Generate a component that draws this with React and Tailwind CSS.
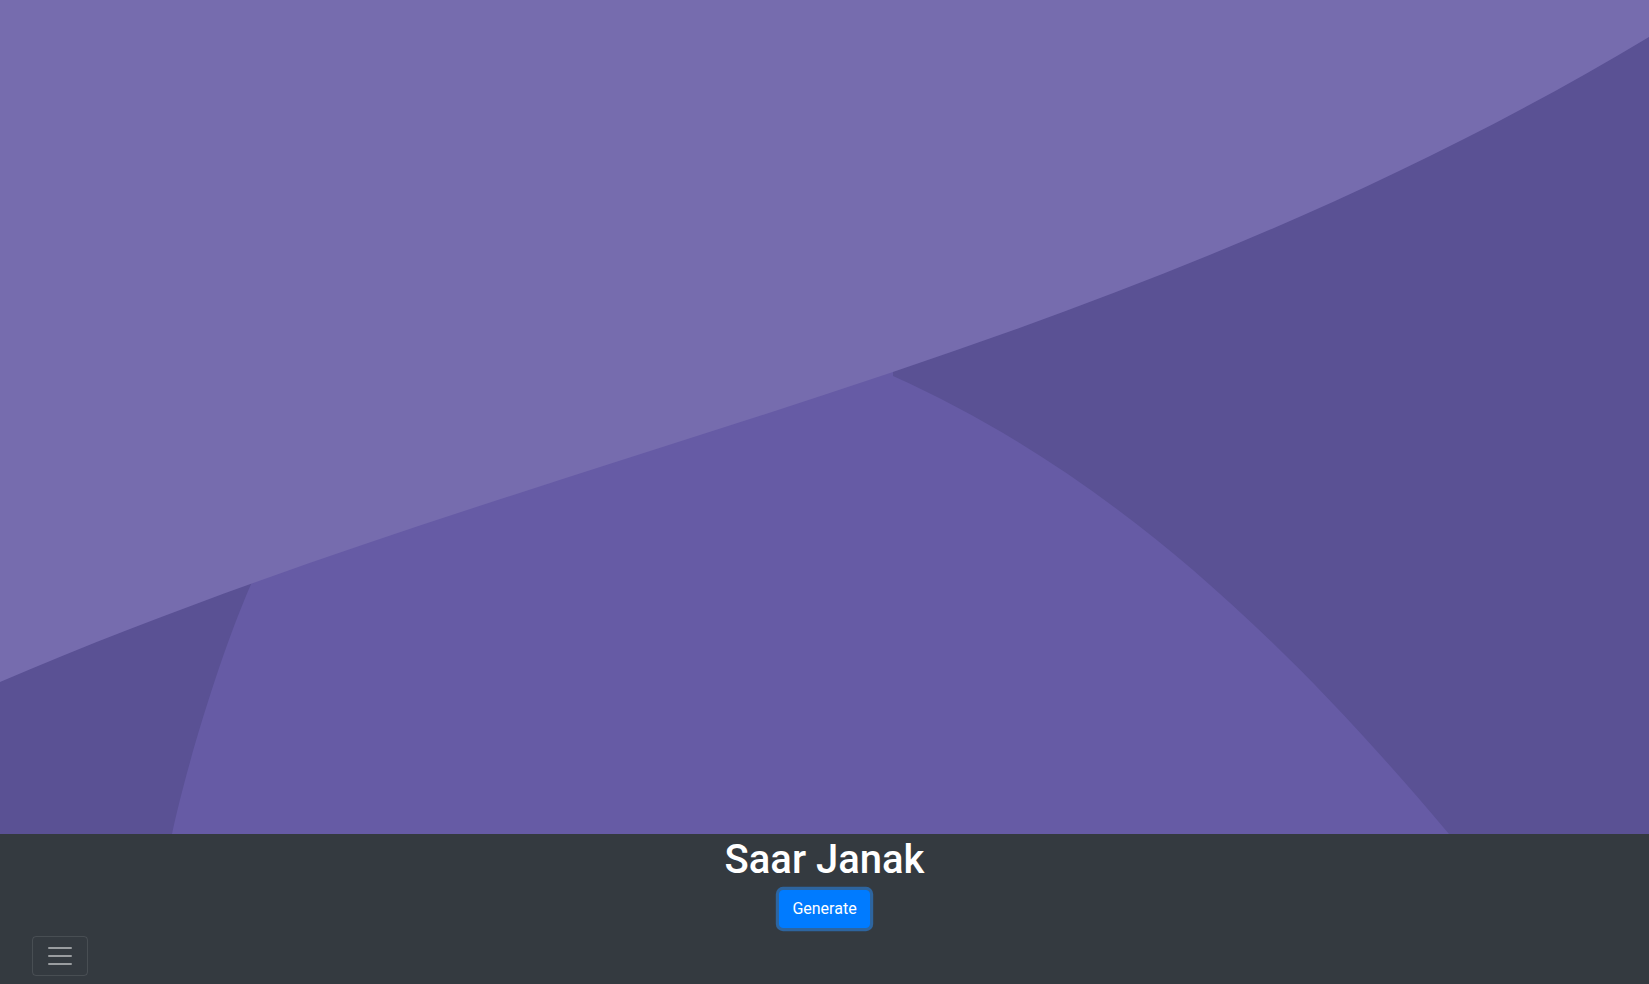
import React from "react";

const Waves = () => (
  <svg
    className="block w-full h-[834px]"
    viewBox="0 0 1649 834"
    preserveAspectRatio="none"
  >
    <rect x="0" y="0" width="1649" height="834" fill="#665ba5" />
    {/* left dark piece */}
    <path
      d="M0,560 L260,560 L252,582 C222,650 188,760 172,834 L0,834 Z"
      fill="#5a5194"
    />
    {/* right dark piece */}
    <path
      d="M893,376 C1093,466 1265,615 1449,834 L1649,834 L1649,0 L893,0 Z"
      fill="#5a5194"
    />
    {/* light top */}
    <path
      d="M0,0 L1649,0 L1649,37 C1099,367 550,446 0,682 Z"
      fill="#766cae"
    />
  </svg>
);

const App = () => {
  return (
    <div className="min-h-[984px] bg-[#343a40] font-['Roboto',_'Liberation_Sans',_sans-serif]">
      <Waves />
      <div className="flex flex-col items-center">
        <h1 className="text-[40px] leading-[48px] font-medium text-white mt-[2px] mb-[6px]">
          Saar Janak
        </h1>
        <button
          type="button"
          className="bg-[#007bff] border border-[#007bff] text-white text-base leading-6 px-3 py-1.5 rounded shadow-[0_0_0_3.2px_rgba(38,143,255,0.5)]"
        >
          Generate
        </button>
      </div>
      <nav className="flex items-center pl-8 py-2">
        <button
          type="button"
          className="px-3 py-1 border border-white/10 rounded leading-none"
        >
          <svg width="30" height="30" viewBox="0 0 30 30" className="block">
            <path
              d="M4 7h22M4 15h22M4 23h22"
              stroke="rgba(255,255,255,0.5)"
              strokeWidth="2"
              strokeLinecap="round"
              strokeMiterlimit="10"
            />
          </svg>
        </button>
      </nav>
    </div>
  );
};

export default App;
